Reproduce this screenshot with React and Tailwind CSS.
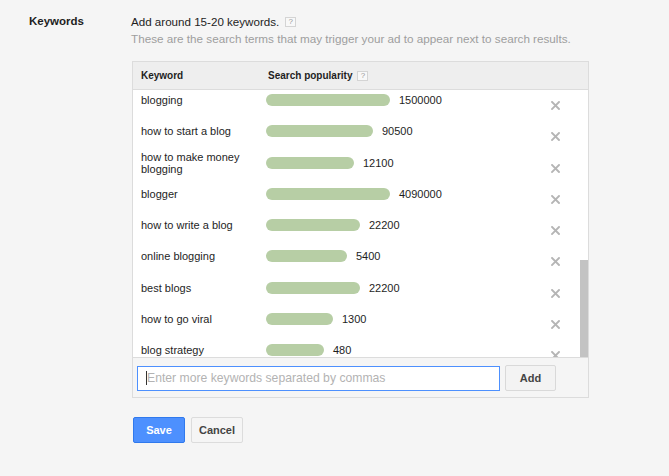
import React from 'react';

const keywords = [
  { term: 'blogging', width: 124, volume: '1500000' },
  { term: 'how to start a blog', width: 107, volume: '90500' },
  { term: 'how to make money blogging', width: 88, volume: '12100' },
  { term: 'blogger', width: 124, volume: '4090000' },
  { term: 'how to write a blog', width: 94, volume: '22200' },
  { term: 'online blogging', width: 81, volume: '5400' },
  { term: 'best blogs', width: 94, volume: '22200' },
  { term: 'how to go viral', width: 67, volume: '1300' },
  { term: 'blog strategy', width: 58, volume: '480' },
];

function HelpBox() {
  return (
    <span className="inline-flex h-[10px] w-[11px] items-center justify-center border border-[#d4d4d4] bg-[#f8f8f8] text-[8px] font-normal leading-none text-[#999]">
      ?
    </span>
  );
}

function RemoveIcon() {
  return (
    <svg width="9" height="9" viewBox="0 0 9 9" className="block">
      <path d="M1 1 L8 8 M8 1 L1 8" stroke="#b5b5b5" strokeWidth="1.9" strokeLinecap="square" />
    </svg>
  );
}

function KeywordRow({ term, width, volume }) {
  return (
    <div className="flex h-[31.25px] shrink-0 items-center pl-[8px]">
      <div className="mb-[11px] flex flex-1 items-center">
        <div className="w-[125px] pr-2 text-[11px] leading-[12px] text-[#1e1e1e]">{term}</div>
        <div className="h-[12px] rounded-full bg-[#b7cea5]" style={{ width }} />
        <div className="ml-[9px] text-[11px] leading-[12px] text-[#1e1e1e]">{volume}</div>
      </div>
      <div className="mr-[28px]">
        <RemoveIcon />
      </div>
    </div>
  );
}

export default function App() {
  return (
    <div className="min-h-screen bg-[#f5f5f5] font-['Liberation_Sans',Arial,sans-serif] text-[#1e1e1e]">
      <div className="flex pt-[14px]">
        <div className="w-[131px] pl-[29px] text-[11.5px] font-bold leading-[15px]">Keywords</div>

        <div className="w-[458px]">
          <div className="flex items-center gap-[6px] text-[11.6px] leading-[15px]">
            Add around 15-20 keywords. <HelpBox />
          </div>
          <div className="mt-[2px] text-[11.7px] leading-[15px] text-[#9e9e9e]">
            These are the search terms that may trigger your ad to appear next to search results.
          </div>

          <div className="ml-[1px] mt-[15px] border border-[#dcdcdc]">
            <div className="flex h-[27px] items-center bg-[#eeeeee] pl-[8px] text-[10px] font-bold">
              <div className="w-[127px]">Keyword</div>
              <div className="flex items-center gap-[5px]">
                Search popularity <HelpBox />
              </div>
            </div>

            <div className="relative flex h-[269px] flex-col overflow-hidden border-y border-[#dcdcdc] bg-white">
              {keywords.map((k) => (
                <KeywordRow key={k.term} {...k} />
              ))}
              <div className="absolute bottom-0 right-0 h-[97px] w-[8px] bg-[#c3c3c3]" />
            </div>

            <div className="flex items-center gap-[5px] bg-[#f5f5f5] pb-[6px] pl-[4px] pt-[7px]">
              <div className="flex h-[25px] w-[363px] items-center border border-[#4d90fe] bg-white pl-[8px]">
                <span className="h-[14px] w-px bg-[#333]" />
                <span className="text-[12.2px] text-[#b3b3b3]">Enter more keywords separated by commas</span>
              </div>
              <button className="h-[26px] w-[51px] rounded-[2px] border border-[#d9d9d9] bg-[#f3f3f3] text-[11px] font-bold text-[#444]">
                Add
              </button>
            </div>
          </div>

          <div className="ml-[2px] mt-[19px] flex gap-[6px]">
            <button className="h-[26px] w-[52px] rounded-[2px] border border-[#3079ed] bg-[#4d90fe] text-[11px] font-bold text-white">
              Save
            </button>
            <button className="h-[26px] w-[52px] rounded-[2px] border border-[#dcdcdc] bg-[#f5f5f5] text-[11px] font-bold text-[#444]">
              Cancel
            </button>
          </div>
        </div>
      </div>
    </div>
  );
}
